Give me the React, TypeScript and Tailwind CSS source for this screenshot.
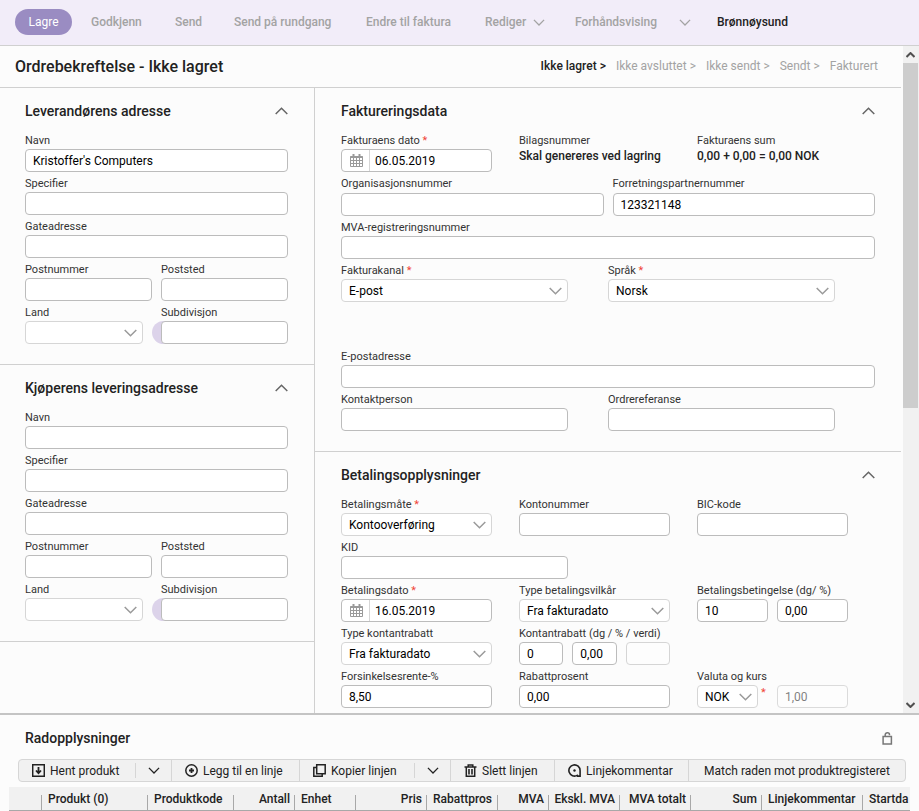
import { useId, type ReactNode } from "react";
import clsx from "clsx";

const INPUT = "h-[23px] w-full min-w-0 rounded border border-[#bcbcbc] bg-white px-[7px] text-xs text-black outline-none";

const Chevron = ({ up = false, className = "h-2 w-[13px]" }: { up?: boolean; className?: string }) => (
    <svg viewBox="0 0 13 8" fill="none" stroke="currentColor" strokeWidth="1.5" className={clsx("shrink-0", className)}>
        <path d={up ? "M.7 7l5.8-5.8L12.3 7" : "M.7 1l5.8 5.8L12.3 1"} />
    </svg>
);

const CalendarIcon = () => (
    <svg viewBox="0 0 13 13" className="ml-px h-[13px] w-[13px] text-[#9a9a9a]" fill="none" stroke="currentColor">
        <path d="M.5 2.5h12v10H.5z" />
        <path d="M.5 3h12" strokeWidth="2" />
        <path d="M3.5 4v8M6.5 4v8M9.5 4v8M1 6.5h11M1 9.5h11" />
        <path d="M3.5 0v3M9.5 0v3" strokeWidth="2" />
    </svg>
);

const FetchIcon = () => (
    <svg viewBox="0 0 13 13" className="h-[13px] w-[13px]" fill="none" stroke="currentColor" strokeWidth="1.5">
        <path d="M.7.7h11.6v11.6H.7z" />
        <path d="M6.5 3v6M4 6.5l2.5 2.6L9 6.5" strokeWidth="1.8" />
    </svg>
);

const PlusIcon = () => (
    <svg viewBox="0 0 13 13" className="h-[13px] w-[13px]" fill="none" stroke="currentColor" strokeWidth="1.5">
        <circle cx="6.5" cy="6.5" r="5.7" />
        <path d="M6.5 4v5M4 6.5h5" strokeWidth="1.8" />
    </svg>
);

const CopyIcon = () => (
    <svg viewBox="0 0 13 13" className="h-[13px] w-[13px]" fill="none" stroke="currentColor" strokeWidth="1.5">
        <path d="M3.7.8h8.5v9H3.7z" />
        <path d="M3.7 3.6H.8v8.6h8.4V9.8" />
    </svg>
);

const TrashIcon = () => (
    <svg viewBox="0 0 13 13" className="h-[13px] w-[13px]" fill="none" stroke="currentColor" strokeWidth="1.5">
        <path d="M.5 3h12M4.2 3V.9h4.6V3M2.3 3v9.2h8.4V3" />
        <path d="M5 5v5.5M8 5v5.5" strokeWidth="1.6" />
    </svg>
);

const CommentIcon = () => (
    <svg viewBox="0 0 13 13" className="h-[13px] w-[13px]" fill="none" stroke="currentColor" strokeWidth="1.6">
        <path d="M12.1 12.1H9.6l-.4-.7a5.6 5.6 0 1 1 2.9-4.9z" />
        <circle cx="6.5" cy="6.5" r="1.2" fill="currentColor" stroke="none" />
    </svg>
);

const LockIcon = () => (
    <svg viewBox="0 0 11 13" className="h-[13px] w-[11px]" fill="none" stroke="currentColor" strokeWidth="1.5">
        <path d="M1.1 4.6h8.3v7.3H1.1z" />
        <path d="M3.2 4.6V2.8a2 2 0 0 1 2-2h.3a2 2 0 0 1 2 2v.4" />
    </svg>
);

interface FieldProps {
    label: string;
    value?: string;
    required?: boolean;
    options?: string[];
    date?: boolean;
    className?: string;
    labelClass?: string;
    hint?: boolean;
}

const Select = ({ id, value, label }: { id?: string; value: string; label?: string }) => (
    <div className="relative">
        <select id={id} aria-label={label} defaultValue={value} className="block h-[23px] w-full appearance-none rounded border border-[#d6d6d6] bg-white pr-6 pl-[7px] text-xs text-black outline-none">
            <option>{value}</option>
        </select>
        <Chevron className="pointer-events-none absolute top-2 right-[6px] h-2 w-[13px] text-[#9a9a9a]" />
    </div>
);

const Label = ({ id, required, className, children }: { id?: string; required?: boolean; className?: string; children: ReactNode }) => (
    <label htmlFor={id} className={clsx("block h-[15px] text-[11px] leading-[13px] whitespace-nowrap text-[#333]", className)}>
        {children}
        {required && <span className="text-[#f04438]"> *</span>}
    </label>
);

const Field = ({ label, value = "", required, options, date, className, labelClass, hint }: FieldProps) => {
    const id = useId();
    return (
        <div className={clsx("min-w-0", className)}>
            <Label id={id} required={required} className={labelClass}>{label}</Label>
            {options ? (
                <Select id={id} value={value} />
            ) : date ? (
                <div className="flex h-[23px] rounded border border-[#bcbcbc] bg-white">
                    <button aria-label="Velg dato" className="flex w-7 shrink-0 items-center justify-center border-r border-[#d6d6d6]">
                        <CalendarIcon />
                    </button>
                    <input id={id} defaultValue={value} className="w-full min-w-0 bg-transparent pl-[5px] text-xs text-black outline-none" />
                </div>
            ) : (
                <div className="relative">
                    {hint && <button aria-label="Velg subdivisjon" className="absolute top-0 -left-[9px] h-[23px] w-4 rounded-l-full bg-[#dcd3ea]" />}
                    <input id={id} defaultValue={value} className={clsx("relative block", INPUT)} />
                </div>
            )}
        </div>
    );
};

const Section = ({ title, className, children }: { title: string; className: string; children: ReactNode }) => (
    <section className={clsx("border-b border-[#d0d0d0] pb-5", className)}>
        <div className="flex h-[46px] items-center justify-between">
            <h2 className="text-sm font-medium text-[#222]">{title}</h2>
            <button aria-label={`Skjul ${title}`} className="text-[#666]">
                <Chevron up />
            </button>
        </div>
        <div className="flex flex-col gap-[5px]">{children}</div>
    </section>
);

const Address = ({ title, name }: { title: string; name?: string }) => (
    <Section title={title} className="pr-[26px] pl-[25px]">
        <Field label="Navn" value={name} />
        <Field label="Specifier" />
        <Field label="Gateadresse" />
        <div className="grid grid-cols-2 gap-[9px]">
            <Field label="Postnummer" />
            <Field label="Poststed" />
        </div>
        <div className="grid grid-cols-2 gap-[9px]">
            <Field label="Land" options={[""]} className="pr-[9px]" />
            <Field label="Subdivisjon" hint />
        </div>
    </Section>
);

const Info = ({ label, value }: { label: string; value: string }) => (
    <div>
        <p className="h-[15px] text-[11px] leading-[13px] text-[#333]">{label}</p>
        <p className="text-xs leading-[14px] font-medium whitespace-nowrap text-[#222]">{value}</p>
    </div>
);

const MENU = [
    { label: "Godkjenn", width: "w-[84px]" },
    { label: "Send", width: "w-[59px]" },
    { label: "Send på rundgang", width: "w-[132px]" },
    { label: "Endre til faktura", width: "w-[119px]" },
    { label: "Rediger", width: "w-[90px]", menu: true },
    { label: "Forhåndsvising", width: "w-[142px]", menu: true },
    { label: "Brønnøysund", width: "w-[90px]", active: true },
];

const STEPS = ["Ikke lagret", "Ikke avsluttet", "Ikke sendt", "Sendt", "Fakturert"];

const TOOLS = [
    { label: "Hent produkt", icon: <FetchIcon />, width: "w-[153px]", menu: true },
    { label: "Legg til en linje", icon: <PlusIcon />, width: "w-[128px]" },
    { label: "Kopier linjen", icon: <CopyIcon />, width: "w-[151px]", menu: true },
    { label: "Slett linjen", icon: <TrashIcon />, width: "w-[104px]" },
    { label: "Linjekommentar", icon: <CommentIcon />, width: "w-[134px]" },
    { label: "Match raden mot produktregisteret", width: "w-[216px]" },
];

const COLUMNS = [
    { label: "", width: "w-[33px]" },
    { label: "Produkt (0)", width: "w-[106px]" },
    { label: "Produktkode", width: "w-[86px]" },
    { label: "Antall", width: "w-[61px]", right: true },
    { label: "Enhet", width: "w-[61px]" },
    { label: "Pris", width: "w-[71px]", right: true },
    { label: "Rabattpros", width: "w-[71px]" },
    { label: "MVA", width: "w-[51px]", right: true },
    { label: "Ekskl. MVA", width: "w-[71px]", right: true },
    { label: "MVA totalt", width: "w-[71px]", right: true },
    { label: "Sum", width: "w-[71px]", right: true },
    { label: "Linjekommentar", width: "w-[101px]" },
    { label: "Startda", width: "w-auto" },
];

const App = () => (
    <div className="flex h-screen flex-col overflow-hidden bg-[#fcfcfc] font-['Roboto','Noto_Sans',sans-serif] text-[#222]">
        <header className="flex h-[46px] shrink-0 items-center border-b border-[#d0d0d0] bg-[#f2edf9] pb-px pl-[15px] text-xs">
            <button className="mr-[19px] h-[26px] w-[57px] rounded-full bg-[#9a8cc2] text-white">Lagre</button>
            {MENU.map(({ label, width, menu, active }) => (
                <div key={label} className={clsx("flex items-center font-medium whitespace-nowrap", width, active ? "text-[#222]" : "text-[#a3a3a3]")}>
                    <button className={clsx(label === "Forhåndsvising" && "w-[104px] text-left", label === "Rediger" && "w-12 text-left")}>{label}</button>
                    {menu && (
                        <button aria-label={`Flere valg for ${label}`}>
                            <Chevron className="h-[7px] w-3" />
                        </button>
                    )}
                </div>
            ))}
        </header>

        <div className="flex min-h-0 flex-1">
            <main className="mr-0.5 flex min-w-0 flex-1 flex-col overflow-y-auto [scrollbar-width:none]">
                <div className="flex h-[42px] shrink-0 items-center justify-between border-b border-[#d0d0d0] pr-[23px] pb-0.5 pl-[15px]">
                    <h1 className="pt-0.5 text-base font-medium">Ordrebekreftelse - Ikke lagret</h1>
                    <ol className="flex gap-2.5 text-xs text-[#a3a3a3]">
                        {STEPS.map((step, i) => (
                            <li key={step} className={i === 0 ? "font-medium text-[#222]" : ""}>
                                {step}{i < STEPS.length - 1 && " >"}
                            </li>
                        ))}
                    </ol>
                </div>

                <div className="flex flex-1">
                    <div className="w-[315px] shrink-0 border-r border-[#d0d0d0]">
                        <Address title="Leverandørens adresse" name="Kristoffer's Computers" />
                        <Address title="Kjøperens leveringsadresse" />
                    </div>

                    <div className="min-w-0 flex-1">
                        <Section title="Faktureringsdata" className="px-[26px]">
                            <div className="grid grid-cols-3">
                                <Field label="Fakturaens dato" value="06.05.2019" required date className="pr-[27px]" />
                                <Info label="Bilagsnummer" value="Skal genereres ved lagring" />
                                <Info label="Fakturaens sum" value="0,00 + 0,00 = 0,00 NOK" />
                            </div>
                            <div className="grid grid-cols-2 gap-[9px]">
                                <Field label="Organisasjonsnummer" labelClass="mb-px" />
                                <Field label="Forretningspartnernummer" labelClass="mb-px" value="123321148" />
                            </div>
                            <Field label="MVA-registreringsnummer" />
                            <div className="grid grid-cols-2">
                                <Field label="Fakturakanal" value="E-post" required options={["E-post"]} className="pr-10" />
                                <Field label="Språk" value="Norsk" required options={["Norsk"]} className="pr-10" />
                            </div>
                            <Field label="E-postadresse" className="mt-[43px]" />
                            <div className="grid grid-cols-2">
                                <Field label="Kontaktperson" className="pr-10" />
                                <Field label="Ordrereferanse" className="pr-10" />
                            </div>
                        </Section>

                        <Section title="Betalingsopplysninger" className="px-[26px]">
                            <div className="grid grid-cols-3">
                                <Field label="Betalingsmåte" value="Kontooverføring" required options={["Kontooverføring"]} className="pr-[27px]" />
                                <Field label="Kontonummer" className="pr-[27px]" />
                                <Field label="BIC-kode" className="pr-[27px]" />
                            </div>
                            <div className="grid grid-cols-2">
                                <Field label="KID" className="pr-10" />
                            </div>
                            <div className="grid grid-cols-3">
                                <Field label="Betalingsdato" value="16.05.2019" required date className="pr-[27px]" />
                                <Field label="Type betalingsvilkår" value="Fra fakturadato" options={["Fra fakturadato"]} className="pr-[27px]" />
                                <div className="pr-[27px]">
                                    <Label id="terms-days">Betalingsbetingelse (dg/ %)</Label>
                                    <div className="flex gap-[9px]">
                                        <input id="terms-days" defaultValue="10" className={INPUT} />
                                        <input aria-label="Betalingsbetingelse %" defaultValue="0,00" className={INPUT} />
                                    </div>
                                </div>
                            </div>
                            <div className="grid grid-cols-3">
                                <Field label="Type kontantrabatt" value="Fra fakturadato" options={["Fra fakturadato"]} className="pr-[27px]" />
                                <div className="pr-[27px]">
                                    <Label id="discount-days">Kontantrabatt (dg / % / verdi)</Label>
                                    <div className="flex gap-[9px]">
                                        <input id="discount-days" defaultValue="0" className={INPUT} />
                                        <input aria-label="Kontantrabatt %" defaultValue="0,00" className={INPUT} />
                                        <input aria-label="Kontantrabatt verdi" disabled className={clsx(INPUT, "opacity-60")} />
                                    </div>
                                </div>
                            </div>
                            <div className="grid grid-cols-3">
                                <Field label="Forsinkelsesrente-%" value="8,50" className="pr-[27px]" />
                                <Field label="Rabattprosent" value="0,00" className="pr-[27px]" />
                                <div className="pr-[27px]">
                                    <Label id="rate">Valuta og kurs</Label>
                                    <div className="flex">
                                        <div className="w-[61px] shrink-0">
                                            <Select label="Valuta" value="NOK" />
                                        </div>
                                        <span className="w-[19px] shrink-0 pl-[3px] text-[11px] text-[#f04438]">*</span>
                                        <input id="rate" disabled defaultValue="1,00" className={clsx(INPUT, "opacity-50")} />
                                    </div>
                                </div>
                            </div>
                        </Section>
                    </div>
                </div>
            </main>

            <div className="flex w-4 shrink-0 flex-col bg-[#f1f1f1] pr-px text-[#505050]">
                <button aria-label="Rull opp" className="flex h-[17px] items-center justify-center">
                    <Chevron up className="h-[6px] w-[9px] stroke-3" />
                </button>
                <div className="flex-1">
                    <div className="h-[54.5%] bg-[#cdcdcd]" />
                </div>
                <button aria-label="Rull ned" className="flex h-[17px] items-center justify-center">
                    <Chevron className="h-[6px] w-[9px] stroke-3" />
                </button>
            </div>
        </div>

        <section className="shrink-0 border-t-2 border-[#c4c4c4]">
            <div className="flex h-11 items-center justify-between pt-0.5 pr-[26px] pl-[25px]">
                <h2 className="text-sm font-medium">Radopplysninger</h2>
                <button aria-label="Lås opp" className="text-[#777]">
                    <LockIcon />
                </button>
            </div>
            <div className="mx-[18px] mb-[5px] flex h-[23px] w-fit rounded-sm border border-[#d6d6d6] bg-[#f1f1f1] text-xs whitespace-nowrap">
                {TOOLS.map(({ label, icon, width, menu }, i) => (
                    <div key={label} className={clsx("flex items-center", width, i < TOOLS.length - 1 && "border-r border-[#d6d6d6]")}>
                        <button className={clsx("flex flex-1 items-center gap-[5px]", icon ? "pl-[13px]" : "justify-center")}>
                            {icon}
                            {label}
                        </button>
                        {menu && (
                            <button aria-label={`Flere valg for ${label}`} className="flex h-[15px] w-9 items-center justify-center border-l border-[#d6d6d6]">
                                <Chevron className="h-[7px] w-3" />
                            </button>
                        )}
                    </div>
                ))}
            </div>
            <div className="mx-[9px]">
                <table className="w-full table-fixed border-b border-[#a8a8a8] bg-[#f1f1f1] text-xs">
                    <thead>
                        <tr>
                            {COLUMNS.map(({ label, width, right }, i) => (
                                <th key={i} className={clsx("p-0 font-medium", width)}>
                                    <div className="flex h-[23px] items-end">
                                        <span className={clsx("min-w-0 flex-1 self-center whitespace-nowrap", right ? "pr-1 text-right" : "pl-1.5 text-left")}>{label}</span>
                                        {i < COLUMNS.length - 1 && <span className="h-[15px] w-px bg-[#a8a8a8]" />}
                                    </div>
                                </th>
                            ))}
                        </tr>
                    </thead>
                </table>
            </div>
        </section>
    </div>
);

export default App;
